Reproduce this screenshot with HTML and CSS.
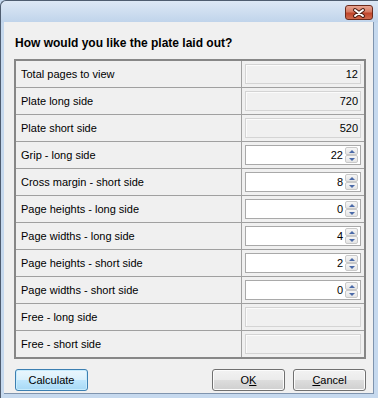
FILE: index.html
```html
<!DOCTYPE html>
<html lang="en">
<head>
<meta charset="UTF-8">
<meta name="viewport" content="width=device-width, initial-scale=1.0">
<title>Plate Layout</title>
<link rel="stylesheet" href="styles.css">
</head>
<body>
<div class="window">
<div class="titlebar">
<div class="close-btn">
<svg width="28" height="15" viewBox="0 0 28 15">
<path d="M10 5 L18 11 M18 5 L10 11" stroke="#4a1c12" stroke-width="4" stroke-linecap="round"/>
<path d="M10 5 L18 11 M18 5 L10 11" stroke="#fff" stroke-width="2" stroke-linecap="round"/>
</svg>
</div>
</div>
<div class="client">
<h1>How would you like the plate laid out?</h1>
<div class="grid">
<div class="label">Total pages to view</div>
<div class="cell"><div class="readonly">12</div></div>
<div class="label">Plate long side</div>
<div class="cell"><div class="readonly">720</div></div>
<div class="label">Plate short side</div>
<div class="cell"><div class="readonly">520</div></div>
<div class="label">Grip - long side</div>
<div class="cell"><div class="numeric"><span class="value">22</span><span class="spin"><span class="up"></span><span class="down"></span></span></div></div>
<div class="label">Cross margin - short side</div>
<div class="cell"><div class="numeric"><span class="value">8</span><span class="spin"><span class="up"></span><span class="down"></span></span></div></div>
<div class="label">Page heights - long side</div>
<div class="cell"><div class="numeric"><span class="value">0</span><span class="spin"><span class="up"></span><span class="down"></span></span></div></div>
<div class="label">Page widths - long side</div>
<div class="cell"><div class="numeric"><span class="value">4</span><span class="spin"><span class="up"></span><span class="down"></span></span></div></div>
<div class="label">Page heights - short side</div>
<div class="cell"><div class="numeric"><span class="value">2</span><span class="spin"><span class="up"></span><span class="down"></span></span></div></div>
<div class="label">Page widths - short side</div>
<div class="cell"><div class="numeric"><span class="value">0</span><span class="spin"><span class="up"></span><span class="down"></span></span></div></div>
<div class="label">Free - long side</div>
<div class="cell"><div class="readonly"></div></div>
<div class="label">Free - short side</div>
<div class="cell"><div class="readonly"></div></div>
</div>
<div class="buttons">
<button class="btn default">Calculate</button>
<button class="btn ok">O<u>K</u></button>
<button class="btn"><u>C</u>ancel</button>
</div>
</div>
</div>
</body>
</html>
```
FILE: styles.css
```css
body {
margin: 0;
font-family: "Liberation Sans", Arial, sans-serif;
font-size: 11px;
color: #000;
background-color: #c4d8ee;
}
.window {
width: 378px;
height: 398px;
box-sizing: border-box;
border-top: 1px solid #4f5d70;
border-left: 1px solid #4f5d70;
border-top-left-radius: 6px;
padding: 0 4px 4px 3px;
background: linear-gradient(#dde8f5, #c0d4eb 21px, #c6d9ee 22px, #c6d9ee);
display: flex;
flex-direction: column;
}
.titlebar {
height: 21px;
display: flex;
justify-content: flex-end;
align-items: flex-start;
}
.close-btn {
width: 28px;
height: 15px;
margin-top: 4px;
margin-right: 1px;
box-sizing: border-box;
border: 1px solid #6b2a1c;
border-radius: 3px;
background: linear-gradient(#e8a593, #d57a62 45%, #c0452b 55%, #cf6a4e);
display: flex;
}
.close-btn svg {
margin: -1px;
}
.client {
flex: 1;
background-color: #f0f0f0;
border-right: 1px solid #7f94ae;
border-bottom: 1px solid #7f94ae;
padding: 0 7px 0 10px;
}
h1 {
font-size: 12px;
font-weight: bold;
line-height: 14px;
margin: 14px 0 9px 1px;
}
.grid {
display: grid;
grid-template-columns: 225px 122px;
grid-auto-rows: 26px;
gap: 1px;
background-color: #a0a0a0;
border: 2px solid #878787;
}
.label {
background-color: #f0f0f0;
display: flex;
align-items: center;
padding-left: 5px;
}
.cell {
background-color: #f0f0f0;
padding: 3px;
}
.readonly {
height: 20px;
box-sizing: border-box;
border: 1px solid #d4d4d4;
box-shadow: inset 1px 1px 0 #fbfbfb;
display: flex;
align-items: center;
justify-content: flex-end;
padding-right: 2px;
}
.numeric {
height: 20px;
box-sizing: border-box;
border: 1px solid #a9a9a9;
background-color: #fff;
padding: 1px 2px 1px 1px;
display: flex;
}
.value {
flex: 1;
text-align: right;
padding-right: 2px;
line-height: 16px;
}
.spin {
width: 13px;
display: flex;
flex-direction: column;
}
.up,
.down {
height: 8px;
box-sizing: border-box;
border: 1px solid #c9c9c9;
border-radius: 2px;
background: linear-gradient(#f6f6f6, #e4e4e4);
display: flex;
justify-content: center;
align-items: center;
}
.up::after {
content: "";
border-left: 3px solid transparent;
border-right: 3px solid transparent;
border-bottom: 3px solid #4b6aa8;
}
.down::after {
content: "";
border-left: 3px solid transparent;
border-right: 3px solid transparent;
border-top: 3px solid #4b6aa8;
}
.buttons {
display: flex;
margin-top: 10px;
padding-left: 1px;
}
.btn {
width: 73px;
height: 22px;
font-family: "Liberation Sans", Arial, sans-serif;
font-size: 11px;
color: #000;
border: 1px solid #707070;
border-radius: 3px;
box-shadow: inset 0 0 0 1px #fcfcfc;
background: linear-gradient(#f2f2f2, #ebebeb 50%, #dddddd 51%, #cfcfcf);
padding: 0;
margin-left: 8px;
}
.btn.default {
margin-left: 0;
border-color: #3c7fb1;
box-shadow: inset 0 0 0 1px #c8ecfd;
background: linear-gradient(#eaf6fd, #d9f0fc 50%, #bee6fd 51%, #a7d9f5);
}
.btn.ok {
margin-left: auto;
}
```
